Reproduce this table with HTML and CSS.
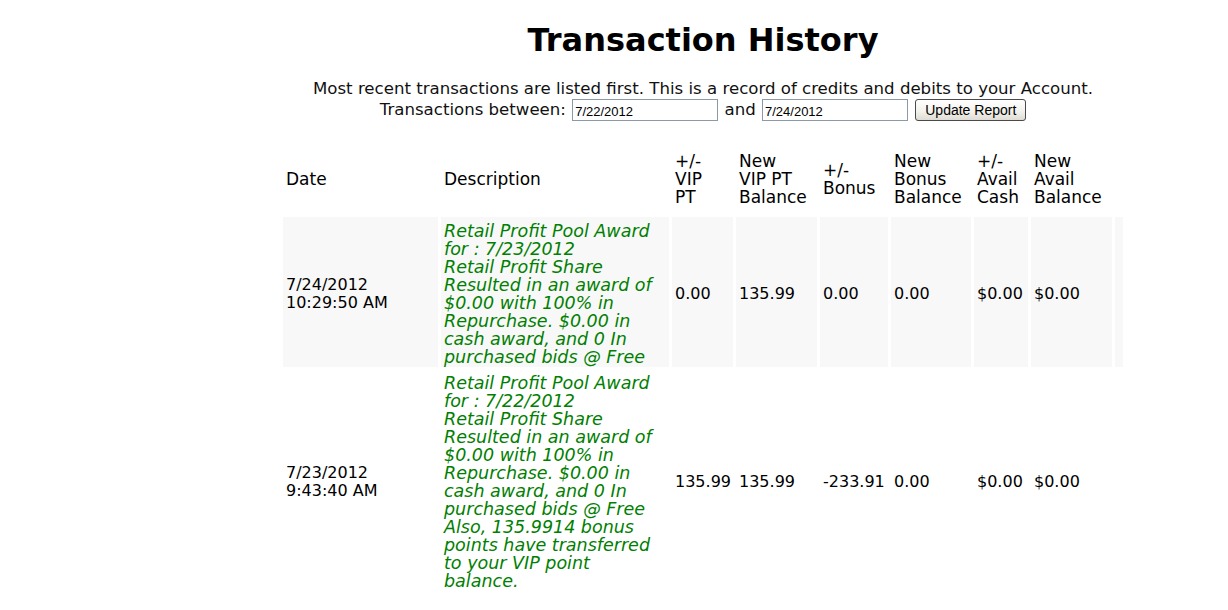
FILE: index.html
```html
<!DOCTYPE html>
<html>
<head>
<meta charset="utf-8">
<title>Transaction History</title>
<link rel="stylesheet" href="styles.css">
</head>
<body>
<div class="page">
  <aside class="side"></aside>
  <main class="main">
    <h1 class="title">Transaction History</h1>
    <div class="intro">
      <div class="intro-line">Most recent transactions are listed first. This is a record of credits and debits to your Account.</div>
      <div class="intro-line filter">Transactions between: <input class="date-input" type="text" value="7/22/2012"> and <input class="date-input" type="text" value="7/24/2012"> <button class="update-btn" type="button">Update Report</button></div>
    </div>
    <table class="tx">
      <thead>
        <tr>
          <th class="c-date">Date</th>
          <th class="c-desc">Description</th>
          <th class="c-vip">+/-<br>VIP<br>PT</th>
          <th class="c-nvip">New<br>VIP PT<br>Balance</th>
          <th class="c-bonus">+/-<br>Bonus</th>
          <th class="c-nbonus">New<br>Bonus<br>Balance</th>
          <th class="c-cash">+/-<br>Avail<br>Cash</th>
          <th class="c-navail">New<br>Avail<br>Balance</th>
          <th class="c-end"></th>
        </tr>
      </thead>
      <tbody>
        <tr class="alt">
          <td>7/24/2012<br>10:29:50 AM</td>
          <td class="desc">Retail Profit Pool Award<br>for : 7/23/2012<br>Retail Profit Share<br>Resulted in an award of<br>$0.00 with 100% in<br>Repurchase. $0.00 in<br>cash award, and 0 In<br>purchased bids @ Free</td>
          <td>0.00</td>
          <td>135.99</td>
          <td>0.00</td>
          <td>0.00</td>
          <td>$0.00</td>
          <td>$0.00</td>
          <td></td>
        </tr>
        <tr>
          <td>7/23/2012<br>9:43:40 AM</td>
          <td class="desc">Retail Profit Pool Award<br>for : 7/22/2012<br>Retail Profit Share<br>Resulted in an award of<br>$0.00 with 100% in<br>Repurchase. $0.00 in<br>cash award, and 0 In<br>purchased bids @ Free<br>Also, 135.9914 bonus<br>points have transferred<br>to your VIP point<br>balance.</td>
          <td>135.99</td>
          <td>135.99</td>
          <td>-233.91</td>
          <td>0.00</td>
          <td>$0.00</td>
          <td>$0.00</td>
          <td></td>
        </tr>
      </tbody>
    </table>
  </main>
</div>
</body>
</html>
```

FILE: styles.css
```css
html, body {
  margin: 0;
  padding: 0;
  background: #ffffff;
}
body {
  font-family: "DejaVu Sans", Verdana, sans-serif;
  color: #000;
}
.page {
  display: flex;
  width: 1228px;
}
.side {
  flex: 0 0 178px;
}
.main {
  flex: 1;
  display: flex;
  flex-direction: column;
  align-items: center;
}
.title {
  margin: 21px 0 20px;
  font-size: 32px;
  line-height: 38px;
  font-weight: bold;
}
.intro {
  text-align: center;
  font-size: 16.6px;
  line-height: 20px;
  color: #111;
}
.filter {
  height: 22px;
  line-height: 22px;
  white-space: nowrap;
}
.date-input {
  box-sizing: border-box;
  width: 146px;
  height: 22px;
  margin: 0 1px;
  padding: 2px 2px 0;
  border: 1px solid #8b9aa8;
  font-family: "Liberation Sans", Arial, sans-serif;
  font-size: 13px;
  color: #000;
  background: #fff;
  vertical-align: top;
}
.update-btn {
  box-sizing: border-box;
  width: 111px;
  height: 22px;
  margin: 0 0 0 1px;
  padding: 0 4px;
  border: 1px solid #4a4a4a;
  border-radius: 3px;
  background: linear-gradient(#ffffff, #f3f2ed 55%, #dedcd3);
  font-family: "Liberation Sans", Arial, sans-serif;
  font-size: 14px;
  color: #000;
  vertical-align: top;
}
.tx {
  margin-top: 26px;
  width: 846px;
  table-layout: fixed;
  border-collapse: separate;
  border-spacing: 3px 2px;
}
.tx th, .tx td {
  box-sizing: border-box;
  padding: 3px 2px 3px 3px;
  text-align: left;
  vertical-align: middle;
  white-space: nowrap;
  line-height: 18px;
  overflow: hidden;
}
.tx th {
  font-weight: normal;
  font-size: 17px;
  padding-bottom: 9px;
}
.tx td {
  font-size: 16px;
  padding-top: 5px;
  padding-bottom: 1px;
}
.tx tr.alt td {
  background: #f8f8f8;
}
.tx td.desc {
  font-style: italic;
  color: #008000;
  font-size: 17.5px;
}
.c-date { width: 155px; }
.c-desc { width: 228px; }
.c-vip { width: 61px; }
.c-nvip { width: 81px; }
.c-bonus { width: 68px; }
.c-nbonus { width: 80px; }
.c-cash { width: 54px; }
.c-navail { width: 81px; }
.c-end { width: 8px; padding: 0 !important; }
```
